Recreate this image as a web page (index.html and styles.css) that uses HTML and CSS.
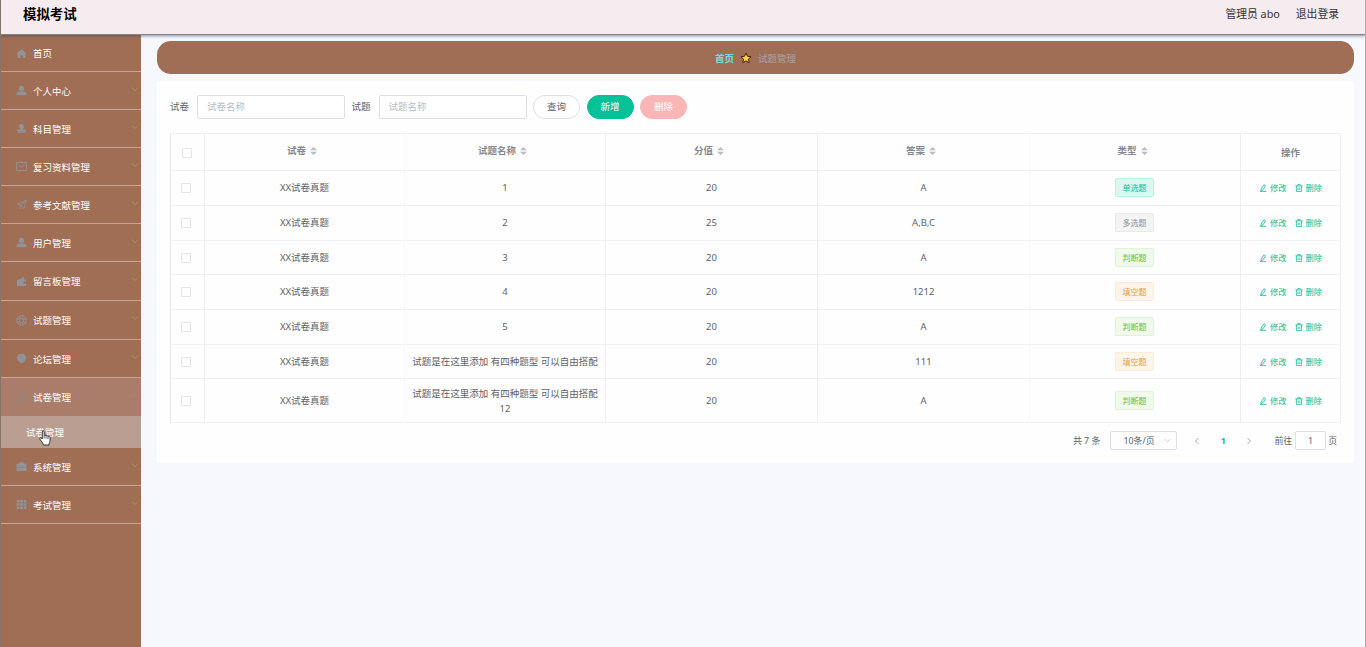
FILE: index.html
```html
<!DOCTYPE html>
<html lang="zh-CN">
<head>
    <meta charset="UTF-8">
    <title>模拟考试</title>
    <link rel="stylesheet" href="styles.css">
</head>
<body>
<!-- 图标 -->
<svg class="icon-defs" width="0" height="0">
    <symbol id="i-home" viewBox="0 0 12 12"><path d="M6 .8L11.5 6.2H10.2V11H7.4V7.8H4.6V11H1.8V6.2H.5Z" fill="currentColor"/></symbol>
    <symbol id="i-user" viewBox="0 0 12 12"><circle cx="6" cy="3.6" r="2.9" fill="currentColor"/><path d="M.6 11.2V9.6C.6 7.6 3 7 6 7S11.4 7.6 11.4 9.6V11.2Z" fill="currentColor"/></symbol>
    <symbol id="i-stamp" viewBox="0 0 12 12"><path d="M6 .8A2.8 2.8 0 0 1 7.8 5.6L7.4 7H10.8V9.6H1.2V7H4.6L4.2 5.6A2.8 2.8 0 0 1 6 .8ZM1.5 10H10.5V11H1.5Z" fill="currentColor"/></symbol>
    <symbol id="i-mail" viewBox="0 0 12 12"><path d="M.6 1.6H11.4V10.4H.6ZM2.5 4L6 6.7L9.5 4" fill="none" stroke="currentColor"/></symbol>
    <symbol id="i-send" viewBox="0 0 12 12"><path d="M1 5.5L11 1.3L8.5 10.5L5.7 7.2L4.4 10.3V6.6ZM4.6 6.8L11 1.3L5.8 7.2" fill="none" stroke="currentColor" stroke-width=".8"/></symbol>
    <symbol id="i-wallet" viewBox="0 0 12 12"><path d="M1 4H3L8 1.2L9.2 4H11V6H8V8.5H11V11H1Z" fill="currentColor"/></symbol>
    <symbol id="i-help" viewBox="0 0 12 12"><g fill="none" stroke="currentColor" stroke-width="1"><circle cx="6" cy="6" r="5.3"/><circle cx="6" cy="6" r="2.3"/><path d="M4.5 1.3V4M7.5 1.3V4M4.5 8V10.7M7.5 8V10.7M1.3 4.5H4M1.3 7.5H4M8 4.5H10.7M8 7.5H10.7"/></g></symbol>
    <symbol id="i-shield" viewBox="0 0 12 12"><path d="M6 .8C9 .8 11 2.6 11 5.2C11 8 8.5 10 6 11.5C3.5 10 1 8 1 5.2C1 2.6 3 .8 6 .8Z" fill="currentColor"/></symbol>
    <symbol id="i-doc" viewBox="0 0 12 12"><path d="M2 1.5H10V11H2ZM4 4H8M4 6H8M4 8H8" fill="none" stroke="currentColor"/></symbol>
    <symbol id="i-case" viewBox="0 0 12 12"><path d="M3.5 3V1.3H8.5V3H11.5V6.5H.5V3H4.5V2.2H7.5V3ZM.5 7H11.5V10.8H.5Z" fill="currentColor"/></symbol>
    <symbol id="i-grid" viewBox="0 0 12 12"><path d="M.8 1H3.8V3.8H.8ZM4.6 1H7.6V3.8H4.6ZM8.4 1H11.4V3.8H8.4ZM.8 4.6H3.8V7.4H.8ZM4.6 4.6H7.6V7.4H4.6ZM8.4 4.6H11.4V7.4H8.4ZM.8 8.2H3.8V11H.8ZM4.6 8.2H7.6V11H4.6ZM8.4 8.2H11.4V11H8.4Z" fill="currentColor"/></symbol>
    <symbol id="i-down" viewBox="0 0 8 8"><path d="M1 2.5L4 5.5L7 2.5" fill="none" stroke="currentColor"/></symbol>
    <symbol id="i-up" viewBox="0 0 8 8"><path d="M1 5.5L4 2.5L7 5.5" fill="none" stroke="currentColor"/></symbol>
    <symbol id="i-left" viewBox="0 0 8 8"><path d="M5.5 1L2.5 4L5.5 7" fill="none" stroke="currentColor"/></symbol>
    <symbol id="i-right" viewBox="0 0 8 8"><path d="M2.5 1L5.5 4L2.5 7" fill="none" stroke="currentColor"/></symbol>
    <symbol id="i-sort" viewBox="0 0 7 8"><path d="M0 3.3L3.5 0L7 3.3ZM0 4.7H7L3.5 8Z" fill="currentColor"/></symbol>
    <symbol id="i-edit" viewBox="0 0 8 8"><path d="M4.9 .8L6.6 1.8L3.8 6L2 7L2.1 5ZM1 7.4H7.3" fill="none" stroke="currentColor" stroke-width=".8"/></symbol>
    <symbol id="i-del" viewBox="0 0 8 8"><path d="M.4 1.9H7.6M2.7 1.8V.6H5.3V1.8M1.4 2V7.4H6.6V2M3.1 3.5V6M4.9 3.5V6" fill="none" stroke="currentColor" stroke-width=".8"/></symbol>
    <symbol id="i-star" viewBox="0 0 12 12"><path d="M6 1L7.5 4.3L11.1 4.7L8.4 7.1L9.2 10.7L6 8.9L2.8 10.7L3.6 7.1L.9 4.7L4.5 4.3Z" fill="#ffd23c" stroke="#4a2410" stroke-width="1"/></symbol>
    <symbol id="i-hand" viewBox="0 0 12 16"><path d="M3.3 9V2C3.3 .5 5.2 .5 5.2 2V5.6C5.5 4.9 7 5 7.1 6C7.6 5.3 8.9 5.5 9 6.6C9.6 6 11 6.3 11 7.5V10.6C11 12 10 13 10 15H4.4C4.2 13 2.5 11.6 1 9.3C.2 8.1 1.6 7.1 2.5 8.1Z" fill="#fff" stroke="#222" stroke-width=".9"/><path d="M5.2 5.6V8.5M7.1 6V8.7M9 6.6V9" stroke="#222" stroke-width=".7"/></symbol>
</svg>

<div class="header">
    <h1 class="title">模拟考试</h1>
    <div class="user-info">
        <span>管理员 abo</span>
        <a href="javascript:;">退出登录</a>
    </div>
</div>

<div class="container">
    <ul class="menu">
        <li class="menu-item"><svg class="icon"><use href="#i-home"/></svg><span>首页</span></li>
        <li class="menu-item"><svg class="icon"><use href="#i-user"/></svg><span>个人中心</span><svg class="arrow"><use href="#i-down"/></svg></li>
        <li class="menu-item"><svg class="icon"><use href="#i-stamp"/></svg><span>科目管理</span><svg class="arrow"><use href="#i-down"/></svg></li>
        <li class="menu-item"><svg class="icon"><use href="#i-mail"/></svg><span>复习资料管理</span><svg class="arrow"><use href="#i-down"/></svg></li>
        <li class="menu-item"><svg class="icon"><use href="#i-send"/></svg><span>参考文献管理</span><svg class="arrow"><use href="#i-down"/></svg></li>
        <li class="menu-item"><svg class="icon"><use href="#i-user"/></svg><span>用户管理</span><svg class="arrow"><use href="#i-down"/></svg></li>
        <li class="menu-item tall"><svg class="icon"><use href="#i-wallet"/></svg><span>留言板管理</span><svg class="arrow"><use href="#i-down"/></svg></li>
        <li class="menu-item tall"><svg class="icon"><use href="#i-help"/></svg><span>试题管理</span><svg class="arrow"><use href="#i-down"/></svg></li>
        <li class="menu-item"><svg class="icon"><use href="#i-shield"/></svg><span>论坛管理</span><svg class="arrow"><use href="#i-down"/></svg></li>
        <li class="menu-item open"><svg class="icon"><use href="#i-doc"/></svg><span>试卷管理</span><svg class="arrow"><use href="#i-up"/></svg></li>
        <li class="sub-item">试卷管理<svg class="cursor"><use href="#i-hand"/></svg></li>
        <li class="menu-item"><svg class="icon"><use href="#i-case"/></svg><span>系统管理</span><svg class="arrow"><use href="#i-down"/></svg></li>
        <li class="menu-item"><svg class="icon"><use href="#i-grid"/></svg><span>考试管理</span><svg class="arrow"><use href="#i-down"/></svg></li>
    </ul>

    <div class="main">
        <div class="breadcrumb">
            <a href="javascript:;">首页</a>
            <svg class="star"><use href="#i-star"/></svg>
            <span>试题管理</span>
        </div>

        <div class="content">
            <div class="search">
                <label>试卷</label>
                <input type="text" placeholder="试卷名称" class="search-input">
                <label>试题</label>
                <input type="text" placeholder="试题名称" class="search-input">
                <button class="btn">查询</button>
                <button class="btn btn-add">新增</button>
                <button class="btn btn-del">删除</button>
            </div>

            <table class="table">
                <colgroup>
                    <col class="col-check"><col class="col-paper"><col class="col-name"><col class="col-score"><col class="col-answer"><col class="col-type"><col class="col-opt">
                </colgroup>
                <thead>
                <tr>
                    <th><i class="checkbox"></i></th>
                    <th class="sortable">试卷<svg class="sort"><use href="#i-sort"/></svg></th>
                    <th class="sortable">试题名称<svg class="sort"><use href="#i-sort"/></svg></th>
                    <th class="sortable">分值<svg class="sort"><use href="#i-sort"/></svg></th>
                    <th class="sortable">答案<svg class="sort"><use href="#i-sort"/></svg></th>
                    <th class="sortable">类型<svg class="sort"><use href="#i-sort"/></svg></th>
                    <th>操作</th>
                </tr>
                </thead>
                <tbody>
                <tr>
                    <td><i class="checkbox"></i></td><td>XX试卷真题</td><td>1</td><td>20</td><td>A</td>
                    <td><span class="tag">单选题</span></td>
                    <td><div class="opt"><a href="javascript:;"><svg><use href="#i-edit"/></svg>修改</a><a href="javascript:;"><svg><use href="#i-del"/></svg>删除</a></div></td>
                </tr>
                <tr>
                    <td><i class="checkbox"></i></td><td>XX试卷真题</td><td>2</td><td>25</td><td>A,B,C</td>
                    <td><span class="tag tag-info">多选题</span></td>
                    <td><div class="opt"><a href="javascript:;"><svg><use href="#i-edit"/></svg>修改</a><a href="javascript:;"><svg><use href="#i-del"/></svg>删除</a></div></td>
                </tr>
                <tr class="short">
                    <td><i class="checkbox"></i></td><td>XX试卷真题</td><td>3</td><td>20</td><td>A</td>
                    <td><span class="tag tag-success">判断题</span></td>
                    <td><div class="opt"><a href="javascript:;"><svg><use href="#i-edit"/></svg>修改</a><a href="javascript:;"><svg><use href="#i-del"/></svg>删除</a></div></td>
                </tr>
                <tr>
                    <td><i class="checkbox"></i></td><td>XX试卷真题</td><td>4</td><td>20</td><td>1212</td>
                    <td><span class="tag tag-warning">填空题</span></td>
                    <td><div class="opt"><a href="javascript:;"><svg><use href="#i-edit"/></svg>修改</a><a href="javascript:;"><svg><use href="#i-del"/></svg>删除</a></div></td>
                </tr>
                <tr>
                    <td><i class="checkbox"></i></td><td>XX试卷真题</td><td>5</td><td>20</td><td>A</td>
                    <td><span class="tag tag-success">判断题</span></td>
                    <td><div class="opt"><a href="javascript:;"><svg><use href="#i-edit"/></svg>修改</a><a href="javascript:;"><svg><use href="#i-del"/></svg>删除</a></div></td>
                </tr>
                <tr class="short">
                    <td><i class="checkbox"></i></td><td>XX试卷真题</td><td>试题是在这里添加 有四种题型 可以自由搭配</td><td>20</td><td>111</td>
                    <td><span class="tag tag-warning">填空题</span></td>
                    <td><div class="opt"><a href="javascript:;"><svg><use href="#i-edit"/></svg>修改</a><a href="javascript:;"><svg><use href="#i-del"/></svg>删除</a></div></td>
                </tr>
                <tr class="double">
                    <td><i class="checkbox"></i></td><td>XX试卷真题</td><td>试题是在这里添加 有四种题型 可以自由搭配 12</td><td>20</td><td>A</td>
                    <td><span class="tag tag-success">判断题</span></td>
                    <td><div class="opt"><a href="javascript:;"><svg><use href="#i-edit"/></svg>修改</a><a href="javascript:;"><svg><use href="#i-del"/></svg>删除</a></div></td>
                </tr>
                </tbody>
            </table>

            <div class="pagination">
                <span class="total">共 7 条</span>
                <div class="page-size"><span>10条/页</span><svg><use href="#i-down"/></svg></div>
                <svg class="prev"><use href="#i-left"/></svg>
                <b class="current">1</b>
                <svg class="next"><use href="#i-right"/></svg>
                <span>前往</span>
                <input type="text" value="1" class="page-input">
                <span>页</span>
            </div>
        </div>
    </div>
</div>
</body>
</html>
```
FILE: styles.css
```css
* {
    box-sizing: border-box;
}

body,
h1,
ul {
    margin: 0;
    padding: 0;
}

body {
    height: 647px;
    overflow: hidden;
    display: flex;
    flex-direction: column;
    border-left: 1px solid #85736d;
    border-right: 1px solid #aaabb0;
    background: #f6f8fd;
    font-family: "Noto Sans", "Noto Sans CJK SC", sans-serif;
    font-size: 9.5px;
    color: #606266;
}

a {
    text-decoration: none;
    color: inherit;
}

svg {
    flex: none;
}

.icon-defs {
    position: absolute;
}

/* 顶部 */
.header {
    flex: none;
    height: 35px;
    padding: 0 26px 6px 22px;
    display: flex;
    align-items: center;
    justify-content: space-between;
    background: #f6ecef;
    border-bottom: 1px solid #858387;
    box-shadow: 0 1px 3px rgba(60, 70, 90, .6);
    z-index: 1;
}

.title {
    font-size: 13.4px;
    line-height: 20px;
    color: #000;
}

.user-info {
    display: flex;
    gap: 16px;
    font-size: 10.8px;
    line-height: 18px;
    color: #333;
}

.container {
    flex: 1;
    display: flex;
}

/* 左侧菜单 */
.menu {
    width: 140px;
    list-style: none;
    background: #a06e54;
    color: #fff;
}

.menu-item {
    height: 38px;
    padding: 0 2px 0 15px;
    display: flex;
    align-items: center;
    border-bottom: 1px solid #c8a694;
}

.menu-item:first-child {
    height: 37px;
}

.menu-item.tall {
    height: 39px;
}

.menu-item.open {
    background: #a97d69;
    border-bottom: 0;
}

.menu-item .icon {
    width: 11px;
    height: 11px;
    margin-right: 6px;
    color: #909399;
}

.menu-item.open .icon {
    color: #96857f;
}

.menu-item .arrow {
    width: 8px;
    height: 8px;
    margin: 0 0 4px auto;
    color: #af8a70;
}

.sub-item {
    position: relative;
    height: 32px;
    padding: 0 0 0 25px;
    line-height: 33px;
    background: #bb9e92;
}

.cursor {
    position: absolute;
    left: 38px;
    top: 14px;
    width: 12px;
    height: 16px;
}

/* 右侧内容 */
.main {
    flex: 1;
    padding: 6px 11px 0 16px;
}

.breadcrumb {
    height: 33px;
    display: flex;
    align-items: center;
    justify-content: center;
    border-radius: 14px;
    background: #a06e54;
    color: #a6a3aa;
}

.breadcrumb a {
    font-weight: bold;
    color: #6ce3df;
}

.star {
    width: 12px;
    height: 12px;
    margin: 0 6px;
}

.content {
    height: 382px;
    margin-top: 7px;
    padding: 14px 13px 0;
    background: #fefefe;
}

.search {
    height: 24px;
    display: flex;
    align-items: center;
    line-height: 14px;
}

.search label {
    padding-bottom: 1px;
}

.search-input {
    width: 148px;
    height: 24px;
    margin: 0 6.5px 0 8px;
    padding: 0 9px 1px;
    border: 1px solid #dcdfe6;
    border-radius: 2px;
    background: #fff;
    font: inherit;
}

.search-input::placeholder {
    color: #b9bcc5;
}

.btn {
    width: 47px;
    height: 24px;
    margin-right: 6.5px;
    padding: 0 0 1px;
    border: 1px solid #dcdfe6;
    border-radius: 12px;
    background: #fff;
    font: inherit;
    color: #606266;
}

.btn-add {
    border-color: #05c197;
    background: #05c197;
    color: #fff;
}

.btn-del {
    border-color: #fab6b6;
    background: #fab6b6;
    color: #fff;
}

/* 表格 */
.table {
    width: 1171px;
    margin-top: 14px;
    table-layout: fixed;
    border-collapse: separate;
    border-spacing: 0;
    border-top: 1px solid #f0f1f4;
    border-left: 1px solid #e6e8ec;
    text-align: center;
    line-height: 15px;
}

.col-check {
    width: 34px;
}

.col-paper {
    width: 200px;
}

.col-name {
    width: 201px;
}

.col-score,
.col-answer {
    width: 212px;
}

.col-type {
    width: 211px;
}

.col-opt {
    width: 100px;
}

.table th,
.table td {
    height: 35px;
    padding: 0 7px 1px;
    border-right: 1px solid #eceef2;
    border-bottom: 1px solid #f0f1f4;
}

.table th:nth-child(2),
.table td:nth-child(2),
.table th:nth-child(5),
.table td:nth-child(5) {
    border-right-color: #f8f9fb;
}

.table th {
    height: 37px;
    padding-bottom: 0;
    color: #85888f;
}

.table .sortable {
    padding: 0 12px 3px 7px;
}

.table .short td {
    height: 34px;
    padding-bottom: 0;
}

.table .double td {
    height: 44px;
    padding-bottom: 0;
}

.checkbox {
    display: block;
    width: 10px;
    height: 10px;
    margin: 1px auto 0 3px;
    border: 1px solid #e2e4ea;
    border-radius: 1px;
}

th .checkbox {
    margin-left: 4px;
}

.sort {
    width: 7px;
    height: 8px;
    margin-left: 4px;
    vertical-align: -1px;
    color: #b9bdc6;
}

.tag {
    display: block;
    width: 39px;
    height: 19px;
    margin: 0 auto 0 78px;
    border: 1px solid #c2eee2;
    border-radius: 2px;
    background: #dcf6f0;
    font-size: 8px;
    line-height: 17px;
    color: #0dbd95;
}

.tag-info {
    border-color: #e9e9eb;
    background: #f4f4f5;
    color: #909399;
}

.tag-success {
    border-color: #e1f3d8;
    background: #f0f9eb;
    color: #67c23a;
}

.tag-warning {
    border-color: #faecd8;
    background: #fdf4ea;
    color: #e0a340;
}

.opt {
    display: flex;
    justify-content: center;
    gap: 8px;
    font-size: 8.2px;
    color: #10bb92;
}

.opt a {
    display: flex;
    align-items: center;
}

.opt svg {
    width: 8px;
    height: 8px;
    margin-right: 3px;
}

/* 分页 */
.pagination {
    height: 19px;
    margin-top: 8px;
    padding-right: 4px;
    display: flex;
    align-items: center;
    justify-content: flex-end;
    font-size: 8.9px;
}

.page-size {
    width: 67px;
    height: 19px;
    margin: 0 15px 0 10px;
    padding: 0 5px 0 12px;
    display: flex;
    align-items: center;
    justify-content: space-between;
    border: 1px solid #dcdfe6;
    border-radius: 2px;
}

.page-size svg {
    width: 7px;
    height: 7px;
    color: #c0c4cc;
}

.prev,
.next {
    width: 10px;
    height: 8px;
    color: #a5a8ae;
}

.current {
    width: 42px;
    text-align: center;
    color: #10bb92;
}

.next {
    margin-right: 20px;
}

.page-input {
    width: 31px;
    height: 19px;
    margin: 0 2px 0 3px;
    padding: 0;
    border: 1px solid #dcdfe6;
    border-radius: 2px;
    background: #fff;
    font: inherit;
    color: #606266;
    text-align: center;
}
```
